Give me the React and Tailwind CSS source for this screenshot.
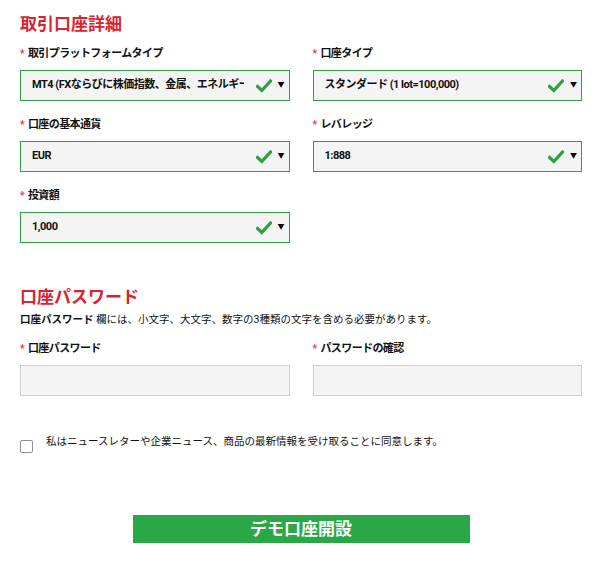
const font = { fontFamily: '"Roboto", "Noto Sans CJK JP", sans-serif' };

const Check = () => (
    <svg width="16" height="14" viewBox="0 0 16 14" className="shrink-0">
        <path d="M1.5 7.5 L5.8 11.5 L14.5 2" fill="none" stroke="#2ea043" strokeWidth="3.2" strokeLinecap="square" />
    </svg>
);

const Label = ({ children }) => (
    <div className="flex items-center h-4 mb-2 text-[11px] tracking-[-0.6px] leading-4 font-bold text-[#111]">
        <span className="text-[#e4343a] text-[10px] mr-[4px]">*</span>
        {children}
    </div>
);

const SelectField = ({ label, value }) => (
    <div>
        <Label>{label}</Label>
        <div className="h-[31px] border border-[#2ea043] bg-[#f4f4f4] flex items-center pl-[11px] pr-[4px]">
            <span className="flex-1 text-[11px] tracking-[-0.5px] font-bold text-[#111] whitespace-nowrap overflow-hidden text-clip">{value}</span>
            <span className="ml-[12px] mr-[6px]"><Check /></span>
            <span className="text-[7px] text-black">▼</span>
        </div>
    </div>
);

const InputField = ({ label }) => (
    <div>
        <Label>{label}</Label>
        <div className="h-[31px] border border-[#cfcfcf] bg-[#f4f4f4]" />
    </div>
);

export default function App() {
    return (
        <div className="w-[602px] h-[563px] bg-white px-5 pt-[12px]" style={font}>
            <h2 className="text-[17px] leading-6 font-bold text-[#d9232e]">取引口座詳細</h2>
            <div className="mt-[10px] grid grid-cols-2 gap-x-[23px] gap-y-4">
                <SelectField label="取引プラットフォームタイプ" value="MT4 (FXならびに株価指数、金属、エネルギーのCFD)" />
                <SelectField label="口座タイプ" value="スタンダード (1 lot=100,000)" />
                <SelectField label="口座の基本通貨" value="EUR" />
                <SelectField label="レバレッジ" value="1:888" />
                <SelectField label="投資額" value="1,000" />
            </div>

            <h2 className="mt-[42px] text-[17px] leading-6 font-bold text-[#d9232e]">口座パスワード</h2>
            <p className="mt-[3px] text-[10.5px] leading-4 text-[#111]">
                <span className="font-bold">口座パスワード</span> 欄には、小文字、大文字、数字の3種類の文字を含める必要があります。
            </p>
            <div className="mt-[13px] grid grid-cols-2 gap-x-[23px]">
                <InputField label="口座パスワード" />
                <InputField label="パスワードの確認" />
            </div>

            <label className="mt-[38px] flex items-start gap-[13px]">
                <span className="mt-[6px] w-[13px] h-[13px] rounded-[2px] border border-[#8f8f8f] bg-white shrink-0" />
                <span className="text-[10.5px] leading-4 text-[#111]">私はニュースレターや企業ニュース、商品の最新情報を受け取ることに同意します。</span>
            </label>

            <div className="mt-[62px] flex justify-center">
                <button className="w-[337px] h-[28px] bg-[#2aa845] text-white text-[17px] font-bold leading-7">
                    デモ口座開設
                </button>
            </div>
        </div>
    );
}
